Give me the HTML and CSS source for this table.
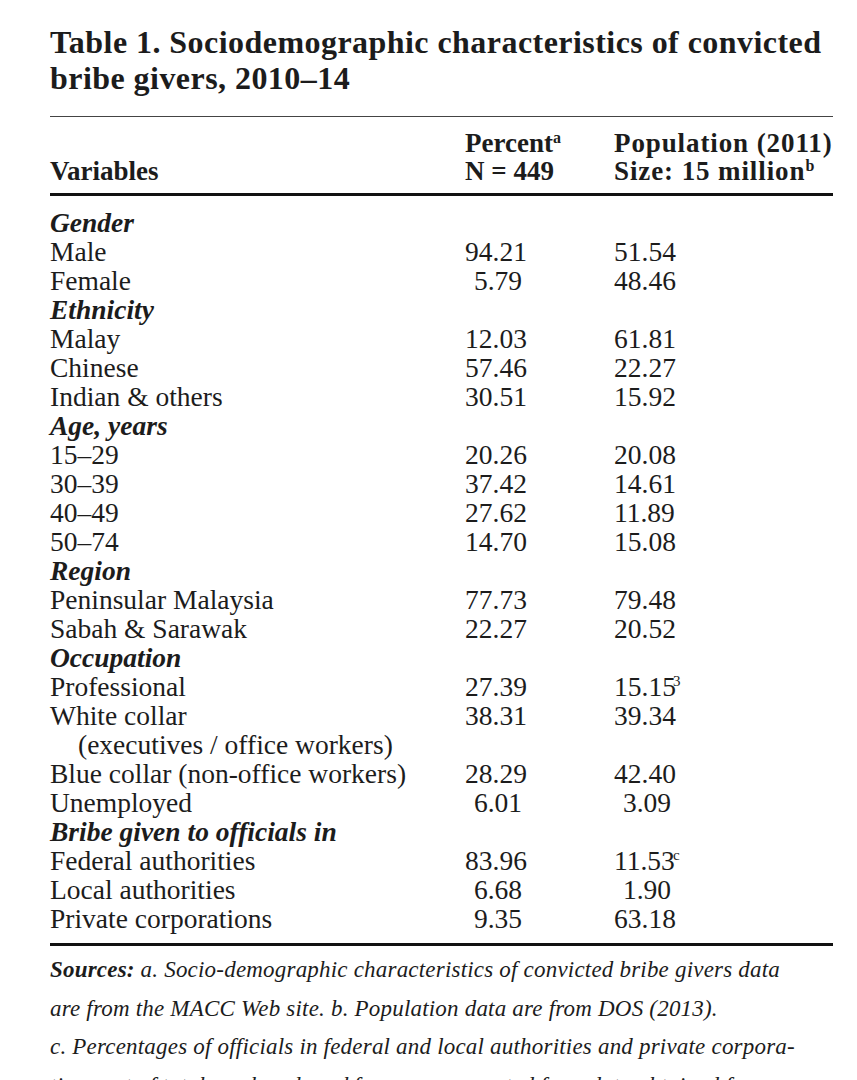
FILE: index.html
```html
<!DOCTYPE html>
<html>
<head>
<meta charset="utf-8">
<link rel="stylesheet" href="styles.css">
</head>
<body>
<div class="page">
  <h1 class="title">Table 1. Sociodemographic characteristics of convicted bribe givers, 2010–14</h1>
  <div class="rule-thin"></div>
  <div class="head">
    <div class="c1 hv">Variables</div>
    <div class="c2">Percent<sup class="hs">a</sup><br>N = 449</div>
    <div class="c3 wide">Population (2011)<br>Size: 15 million<sup class="hs">b</sup></div>
  </div>
  <div class="rule-thick"></div>
  <div class="body">
    <div class="row"><div class="c1 cat">Gender</div></div>
    <div class="row"><div class="c1">Male</div><div class="c2"><span class="n">94.21</span></div><div class="c3"><span class="n">51.54</span></div></div>
    <div class="row"><div class="c1">Female</div><div class="c2"><span class="n">5.79</span></div><div class="c3"><span class="n">48.46</span></div></div>
    <div class="row"><div class="c1 cat">Ethnicity</div></div>
    <div class="row"><div class="c1">Malay</div><div class="c2"><span class="n">12.03</span></div><div class="c3"><span class="n">61.81</span></div></div>
    <div class="row"><div class="c1">Chinese</div><div class="c2"><span class="n">57.46</span></div><div class="c3"><span class="n">22.27</span></div></div>
    <div class="row"><div class="c1">Indian &amp; others</div><div class="c2"><span class="n">30.51</span></div><div class="c3"><span class="n">15.92</span></div></div>
    <div class="row"><div class="c1 cat">Age, years</div></div>
    <div class="row"><div class="c1">15–29</div><div class="c2"><span class="n">20.26</span></div><div class="c3"><span class="n">20.08</span></div></div>
    <div class="row"><div class="c1">30–39</div><div class="c2"><span class="n">37.42</span></div><div class="c3"><span class="n">14.61</span></div></div>
    <div class="row"><div class="c1">40–49</div><div class="c2"><span class="n">27.62</span></div><div class="c3"><span class="n">11.89</span></div></div>
    <div class="row"><div class="c1">50–74</div><div class="c2"><span class="n">14.70</span></div><div class="c3"><span class="n">15.08</span></div></div>
    <div class="row"><div class="c1 cat">Region</div></div>
    <div class="row"><div class="c1">Peninsular Malaysia</div><div class="c2"><span class="n">77.73</span></div><div class="c3"><span class="n">79.48</span></div></div>
    <div class="row"><div class="c1">Sabah &amp; Sarawak</div><div class="c2"><span class="n">22.27</span></div><div class="c3"><span class="n">20.52</span></div></div>
    <div class="row"><div class="c1 cat">Occupation</div></div>
    <div class="row"><div class="c1">Professional</div><div class="c2"><span class="n">27.39</span></div><div class="c3"><span class="n">15.15</span><sup class="ns">3</sup></div></div>
    <div class="row"><div class="c1">White collar</div><div class="c2"><span class="n">38.31</span></div><div class="c3"><span class="n">39.34</span></div></div>
    <div class="row"><div class="c1 ind">(executives / office workers)</div></div>
    <div class="row"><div class="c1">Blue collar (non-office workers)</div><div class="c2"><span class="n">28.29</span></div><div class="c3"><span class="n">42.40</span></div></div>
    <div class="row"><div class="c1">Unemployed</div><div class="c2"><span class="n">6.01</span></div><div class="c3"><span class="n">3.09</span></div></div>
    <div class="row"><div class="c1 cat">Bribe given to officials in</div></div>
    <div class="row"><div class="c1">Federal authorities</div><div class="c2"><span class="n">83.96</span></div><div class="c3"><span class="n">11.53</span><sup class="ns">c</sup></div></div>
    <div class="row"><div class="c1">Local authorities</div><div class="c2"><span class="n">6.68</span></div><div class="c3"><span class="n">1.90</span></div></div>
    <div class="row"><div class="c1">Private corporations</div><div class="c2"><span class="n">9.35</span></div><div class="c3"><span class="n">63.18</span></div></div>
  </div>
  <div class="rule-end"></div>
  <div class="notes">
    <div class="line"><b>Sources:</b> a. Socio-demographic characteristics of convicted bribe givers data</div>
    <div class="line">are from the MACC Web site. b. Population data are from DOS (2013).</div>
    <div class="line">c. Percentages of officials in federal and local authorities and private corpora-</div>
    <div class="line">tions out of total employed workforce are computed from data obtained from</div>
  </div>
</div>
</body>
</html>
```
FILE: styles.css
```css
html, body {
  margin: 0;
  padding: 0;
  background: #ffffff;
}
body {
  height: 1080px;
  overflow: hidden;
  color: #1c1c1c;
  font-family: "Liberation Serif", "Times New Roman", serif;
}
.page {
  width: 783px;
  padding: 24px 0 0 50px;
}
.title {
  margin: 0;
  font-size: 32px;
  line-height: 36px;
  font-weight: bold;
  letter-spacing: 0.45px;
}
.rule-thin {
  margin-top: 20px;
  height: 1px;
  background: #444;
}
.head {
  display: grid;
  grid-template-columns: 415px 149px 1fr;
  font-weight: bold;
  font-size: 27px;
  line-height: 28px;
  padding-top: 12px;
  padding-bottom: 8px;
}
.head .hv {
  align-self: end;
}
.head .wide {
  letter-spacing: 0.9px;
}
.hs {
  font-size: 16px;
  line-height: 0;
  vertical-align: 9px;
  letter-spacing: 0;
}
.rule-thick {
  height: 3px;
  background: #111;
}
.body {
  padding-top: 12px;
  padding-bottom: 10px;
}
.row {
  display: grid;
  grid-template-columns: 415px 149px 1fr;
  font-size: 27.5px;
  line-height: 29px;
  height: 29px;
  white-space: nowrap;
}
.cat {
  font-style: italic;
  font-weight: bold;
}
.ind {
  padding-left: 28px;
}
.n {
  display: inline-block;
  width: 57px;
  text-align: right;
}
.ns {
  font-size: 15px;
  line-height: 0;
  vertical-align: 10px;
  margin-left: 2px;
}
.rule-end {
  height: 3px;
  background: #111;
  border-bottom: 4px solid #fff;
  box-shadow: 0 6px 0 -5px #ccc;
}
.notes {
  margin-top: 1px;
  font-style: italic;
  font-size: 23px;
  line-height: 38.5px;
  letter-spacing: 0.2px;
  white-space: nowrap;
}
.notes b {
  font-weight: bold;
}
```
